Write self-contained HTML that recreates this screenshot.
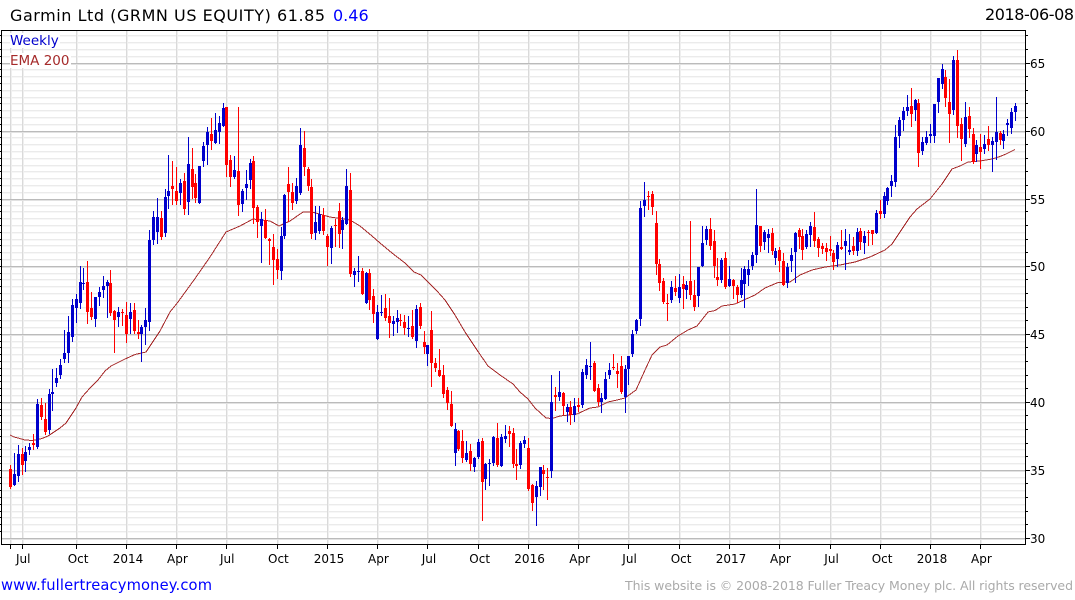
<!DOCTYPE html>
<html lang="en"><head><meta charset="utf-8"><title>Garmin Ltd (GRMN US EQUITY)</title>
<style>
html,body{margin:0;padding:0;background:#fff;width:1075px;height:600px;overflow:hidden}
svg{display:block}
text{font-family:"DejaVu Sans","Liberation Sans",sans-serif;white-space:pre}
</style></head><body>
<svg width="1075" height="600" viewBox="0 0 1075 600" xmlns="http://www.w3.org/2000/svg">
<rect width="1075" height="600" fill="#fff"/>
<g shape-rendering="crispEdges" fill="none">
<!-- minor horizontal grid -->
<path transform="translate(0,1)" stroke="#f7f7f7" d="M2 531.5H1025M2 524.5H1025M2 517.5H1025M2 511.5H1025M2 504.5H1025M2 497.5H1025M2 490.5H1025M2 483.5H1025M2 477.5H1025M2 463.5H1025M2 456.5H1025M2 449.5H1025M2 443.5H1025M2 436.5H1025M2 429.5H1025M2 422.5H1025M2 415.5H1025M2 409.5H1025M2 395.5H1025M2 388.5H1025M2 381.5H1025M2 375.5H1025M2 368.5H1025M2 361.5H1025M2 354.5H1025M2 347.5H1025M2 341.5H1025M2 327.5H1025M2 320.5H1025M2 313.5H1025M2 307.5H1025M2 300.5H1025M2 293.5H1025M2 286.5H1025M2 279.5H1025M2 273.5H1025M2 259.5H1025M2 252.5H1025M2 245.5H1025M2 239.5H1025M2 232.5H1025M2 225.5H1025M2 218.5H1025M2 211.5H1025M2 205.5H1025M2 192.5H1025M2 185.5H1025M2 178.5H1025M2 171.5H1025M2 165.5H1025M2 158.5H1025M2 151.5H1025M2 144.5H1025M2 137.5H1025M2 124.5H1025M2 117.5H1025M2 110.5H1025M2 103.5H1025M2 97.5H1025M2 90.5H1025M2 83.5H1025M2 76.5H1025M2 69.5H1025M2 56.5H1025M2 49.5H1025M2 42.5H1025M2 35.5H1025"/>
<path stroke="#ebebeb" d="M2 531.5H1025M2 524.5H1025M2 517.5H1025M2 511.5H1025M2 504.5H1025M2 497.5H1025M2 490.5H1025M2 483.5H1025M2 477.5H1025M2 463.5H1025M2 456.5H1025M2 449.5H1025M2 443.5H1025M2 436.5H1025M2 429.5H1025M2 422.5H1025M2 415.5H1025M2 409.5H1025M2 395.5H1025M2 388.5H1025M2 381.5H1025M2 375.5H1025M2 368.5H1025M2 361.5H1025M2 354.5H1025M2 347.5H1025M2 341.5H1025M2 327.5H1025M2 320.5H1025M2 313.5H1025M2 307.5H1025M2 300.5H1025M2 293.5H1025M2 286.5H1025M2 279.5H1025M2 273.5H1025M2 259.5H1025M2 252.5H1025M2 245.5H1025M2 239.5H1025M2 232.5H1025M2 225.5H1025M2 218.5H1025M2 211.5H1025M2 205.5H1025M2 192.5H1025M2 185.5H1025M2 178.5H1025M2 171.5H1025M2 165.5H1025M2 158.5H1025M2 151.5H1025M2 144.5H1025M2 137.5H1025M2 124.5H1025M2 117.5H1025M2 110.5H1025M2 103.5H1025M2 97.5H1025M2 90.5H1025M2 83.5H1025M2 76.5H1025M2 69.5H1025M2 56.5H1025M2 49.5H1025M2 42.5H1025M2 35.5H1025"/>
<!-- vertical grid -->
<path transform="translate(1,0)" stroke="#efefef" d="M10.5 31V544M22.5 31V544M76.5 31V544M126.5 31V544M176.5 31V544M226.5 31V544M277.5 31V544M327.5 31V544M377.5 31V544M427.5 31V544M478.5 31V544M528.5 31V544M578.5 31V544M628.5 31V544M679.5 31V544M729.5 31V544M779.5 31V544M830.5 31V544M880.5 31V544M930.5 31V544M980.5 31V544"/>
<path stroke="#dadada" d="M10.5 31V544M22.5 31V544M76.5 31V544M126.5 31V544M176.5 31V544M226.5 31V544M277.5 31V544M327.5 31V544M377.5 31V544M427.5 31V544M478.5 31V544M528.5 31V544M578.5 31V544M628.5 31V544M679.5 31V544M729.5 31V544M779.5 31V544M830.5 31V544M880.5 31V544M930.5 31V544M980.5 31V544"/>
<!-- major horizontal grid -->
<path transform="translate(0,1)" stroke="#e2e2e2" d="M2 538.5H1025M2 470.5H1025M2 402.5H1025M2 334.5H1025M2 266.5H1025M2 199.5H1025M2 131.5H1025M2 63.5H1025"/>
<path stroke="#bbbbbb" d="M2 538.5H1025M2 470.5H1025M2 402.5H1025M2 334.5H1025M2 266.5H1025M2 199.5H1025M2 131.5H1025M2 63.5H1025"/>
<rect x="10" y="33" width="50" height="15" fill="#fff"/>
<rect x="10" y="53" width="61" height="15" fill="#fff"/>
<!-- frame and ticks -->
<path stroke="#000" d="M1.5 30.5H1025.5V544.5H1.5Z"/>
<path stroke="#000" d="M0 531.5h1M0 524.5h1M0 517.5h1M0 511.5h1M0 504.5h1M0 497.5h1M0 490.5h1M0 483.5h1M0 477.5h1M0 470.5h1M0 463.5h1M0 456.5h1M0 449.5h1M0 443.5h1M0 436.5h1M0 429.5h1M0 422.5h1M0 415.5h1M0 409.5h1M0 402.5h1M0 395.5h1M0 388.5h1M0 381.5h1M0 375.5h1M0 368.5h1M0 361.5h1M0 354.5h1M0 347.5h1M0 341.5h1M0 334.5h1M0 327.5h1M0 320.5h1M0 313.5h1M0 307.5h1M0 300.5h1M0 293.5h1M0 286.5h1M0 279.5h1M0 273.5h1M0 266.5h1M0 259.5h1M0 252.5h1M0 245.5h1M0 239.5h1M0 232.5h1M0 225.5h1M0 218.5h1M0 211.5h1M0 205.5h1M0 199.5h1M0 192.5h1M0 185.5h1M0 178.5h1M0 171.5h1M0 165.5h1M0 158.5h1M0 151.5h1M0 144.5h1M0 137.5h1M0 131.5h1M0 124.5h1M0 117.5h1M0 110.5h1M0 103.5h1M0 97.5h1M0 90.5h1M0 83.5h1M0 76.5h1M0 69.5h1M0 63.5h1M0 56.5h1M0 49.5h1M0 42.5h1M0 35.5h1"/>
<path stroke="#000" d="M1026 524.5h2M1026 511.5h2M1026 497.5h2M1026 483.5h2M1026 456.5h2M1026 443.5h2M1026 429.5h2M1026 415.5h2M1026 388.5h2M1026 375.5h2M1026 361.5h2M1026 347.5h2M1026 320.5h2M1026 307.5h2M1026 293.5h2M1026 279.5h2M1026 252.5h2M1026 239.5h2M1026 225.5h2M1026 211.5h2M1026 185.5h2M1026 171.5h2M1026 158.5h2M1026 144.5h2M1026 117.5h2M1026 103.5h2M1026 90.5h2M1026 76.5h2M1026 49.5h2M1026 35.5h2M1026 538.5h4M1026 470.5h4M1026 402.5h4M1026 334.5h4M1026 266.5h4M1026 199.5h4M1026 131.5h4M1026 63.5h4"/>
<path stroke="#000" d="M10.5 545v4M22.5 545v4M76.5 545v4M126.5 545v4M176.5 545v4M226.5 545v4M277.5 545v4M327.5 545v4M377.5 545v4M427.5 545v4M478.5 545v4M528.5 545v4M578.5 545v4M628.5 545v4M679.5 545v4M729.5 545v4M779.5 545v4M830.5 545v4M880.5 545v4M930.5 545v4M980.5 545v4"/>
<!-- EMA -->
<polyline stroke="#a52a2a" points="10,435 14,437 18,438 25,440 33,440.5 42,438.5 48,436 60,428 66,423 76,408 82,397 90,388 98,380 105,371 111,366 125,359 135,354.5 146,352 160,331 170,312 178,302 194,280 210,257 226,232 240,226 253,219 270,221 279,226 290,221 303,212 312,212 330,217 350,220 360,226 372,236 380,243 392,253 405,263 414,272 421,275 437,291 445,300 455,315 465,332 477,350 488,366 500,375 513,384 520,392 528,399 535,408 546,418 552,418.5 560,416 577,414 590,408 598,407 608,402 617,400 625,398 636,390 645,370 652,355 660,347 667,345 678,336 688,330 697,326 708,312 715,310.5 722,306 735,304 755,295 765,288 778,282.5 790,282 800,275 812,270 825,267 840,265 855,262 870,257 885,250 892,244 900,232 910,217 917,209 930,199 942,184 952,169 960,166 968,162 980,161 992,159 1000,156.5 1006,154 1015,149.5"/>
<!-- blue wicks -->
<path stroke="#0000cc" d="M14.5 453V486M18.5 445V482M25.5 446V472M29.5 443V455M37.5 399V449M49.5 389V434M52.5 369V411M56.5 368V387M60.5 359V379M64.5 330V363M68.5 316V363M72.5 299V342M76.5 294V323M80.5 266V309M83.5 268V290M95.5 297V327M99.5 287V306M103.5 276V298M107.5 280V318M118.5 307V327M130.5 303V334M141.5 325V362M145.5 308V345M149.5 230V331M153.5 211V245M157.5 198V244M165.5 189V237M168.5 155V209M180.5 179V205M188.5 137V215M199.5 166V204M203.5 142V167M207.5 127V165M215.5 113V144M219.5 116V144M223.5 103V127M234.5 156V179M242.5 189V212M246.5 170V200M250.5 159V189M261.5 212V263M281.5 227V280M284.5 194V239M296.5 178V204M300.5 128V195M315.5 206V240M319.5 206V234M331.5 226V264M342.5 217V249M346.5 169V225M354.5 268V287M358.5 256V282M366.5 272V304M377.5 305V340M381.5 295V316M393.5 316V336M397.5 310V333M408.5 316V337M416.5 305V348M427.5 345V366M455.5 423V466M466.5 441V462M474.5 457V472M478.5 439V459M485.5 463V490M489.5 459V486M493.5 436V466M501.5 434V467M505.5 425V443M520.5 441V469M524.5 436V448M536.5 481V526M540.5 467V496M551.5 375V478M559.5 371V401M567.5 404V422M574.5 398V422M582.5 369V408M586.5 359V379M590.5 342V380M601.5 393V413M605.5 372V400M609.5 363V379M625.5 365V413M628.5 356V385M632.5 330V357M636.5 319V334M640.5 201V326M644.5 182V217M671.5 281V303M679.5 274V303M686.5 281V299M698.5 267V307M702.5 226V267M706.5 226V245M721.5 258V283M729.5 266V287M741.5 268V298M744.5 266V308M748.5 260V286M752.5 252V270M756.5 189V263M764.5 230V250M768.5 229V253M775.5 248V265M787.5 263V288M791.5 248V272M795.5 232V283M806.5 230V249M810.5 222V247M837.5 242V267M845.5 229V270M849.5 234V255M857.5 228V256M864.5 231V254M876.5 210V234M884.5 192V218M887.5 187V205M891.5 175V197M895.5 125V187M899.5 117V148M903.5 107V131M907.5 95V116M915.5 99V121M922.5 137V155M926.5 131V145M930.5 124V143M934.5 104V143M938.5 78V113M942.5 64V89M953.5 56V115M965.5 102V147M976.5 140V162M984.5 135V154M992.5 137V172M996.5 97V160M1003.5 130V149M1007.5 119V136M1011.5 108V134M1015.5 103V121"/>
<!-- blue bodies -->
<path stroke="#0000cc" stroke-width="3" d="M14.5 474V485M18.5 454V476M25.5 452V461M29.5 447V450M37.5 404V447M49.5 394V430M52.5 392V394M56.5 378V383M60.5 365V375M64.5 353V359M68.5 332V353M72.5 305V337M76.5 299V308M80.5 282V303M83.5 283V284M95.5 297V319M99.5 292V297M103.5 286V290M107.5 282V286M118.5 312V317M130.5 312V319M141.5 327V334M145.5 320V327M149.5 240V322M153.5 217V240M157.5 217V232M165.5 197V233M168.5 191V196M180.5 183V193M188.5 164V202M199.5 166V203M203.5 146V161M207.5 132V145M215.5 130V143M219.5 123V132M223.5 108V126M234.5 170V177M242.5 191V204M246.5 184V188M250.5 163V180M261.5 219V226M281.5 236V271M284.5 195V236M296.5 186V201M300.5 145V193M315.5 222V233M319.5 214V231M331.5 228V248M342.5 220V230M346.5 186V224M354.5 271V275M358.5 271V272M366.5 273V303M377.5 312V339M381.5 312V313M393.5 321V324M397.5 318V322M408.5 328V329M416.5 309V341M427.5 345V354M455.5 429V453M466.5 453V460M474.5 458V467M478.5 442V457M485.5 464V479M489.5 463V464M493.5 437V463M501.5 437V466M505.5 436V439M520.5 443V465M524.5 440V444M536.5 486V497M540.5 467V487M551.5 402V471M559.5 392V397M567.5 407V412M574.5 406V415M582.5 372V405M586.5 365V375M590.5 366V367M601.5 398V402M605.5 379V399M609.5 370V375M625.5 369V397M628.5 356V369M632.5 334V354M636.5 320V331M640.5 208V319M644.5 200V206M671.5 287V300M679.5 287V298M686.5 285V290M698.5 267V296M702.5 243V266M706.5 229V240M721.5 260V280M729.5 279V286M741.5 280V295M744.5 269V284M748.5 269V275M752.5 255V266M756.5 225V255M764.5 232V242M768.5 234V238M775.5 251V258M787.5 267V283M791.5 255V261M795.5 233V252M806.5 234V247M810.5 226V235M837.5 245V259M845.5 241V246M849.5 250V252M857.5 232V251M864.5 236V243M876.5 213V233M884.5 196V214M887.5 188V201M891.5 181V186M895.5 137V182M899.5 120V136M903.5 111V120M907.5 107V111M915.5 100V110M922.5 142V151M926.5 137V143M930.5 134V136M934.5 104V136M938.5 78V102M942.5 69V84M953.5 60V110M965.5 117V144M976.5 145V154M984.5 144V149M992.5 141V145M996.5 132V142M1003.5 134V141M1007.5 123V125M1011.5 112V128M1015.5 106V112"/>
<!-- red wicks -->
<path stroke="#ff0000" d="M10.5 465V489M22.5 448V475M33.5 434V450M41.5 398V420M45.5 403V435M87.5 261V324M91.5 292V320M110.5 270V316M114.5 310V353M122.5 309V326M126.5 302V343M134.5 303V334M138.5 320V339M161.5 211V240M172.5 161V205M176.5 167V205M184.5 173V215M192.5 148V199M195.5 174V203M211.5 118V150M226.5 107V177M230.5 155V187M238.5 107V216M253.5 156V224M257.5 205V238M265.5 209V239M269.5 238V265M273.5 234V285M277.5 249V279M288.5 167V222M292.5 183V210M304.5 131V176M308.5 167V191M311.5 179V239M323.5 208V235M327.5 234V266M335.5 219V247M339.5 203V248M350.5 173V277M362.5 268V295M369.5 269V310M373.5 289V323M385.5 294V321M389.5 298V338M400.5 314V326M404.5 315V335M412.5 310V339M420.5 303V329M424.5 331V354M431.5 311V387M435.5 358V372M439.5 349V377M443.5 365V398M447.5 387V410M451.5 391V427M458.5 430V451M462.5 430V463M470.5 444V471M482.5 438V521M497.5 423V467M509.5 426V447M513.5 428V468M516.5 449V480M528.5 438V491M532.5 484V511M543.5 465V490M547.5 468V500M555.5 387V411M563.5 392V415M570.5 401V425M578.5 398V412M594.5 361V392M598.5 384V406M613.5 354V370M617.5 363V388M621.5 356V394M648.5 191V210M652.5 191V215M656.5 211V275M659.5 259V291M663.5 278V304M667.5 294V321M675.5 276V296M683.5 276V309M690.5 221V300M694.5 280V311M710.5 218V250M714.5 230V278M717.5 258V286M725.5 252V289M733.5 279V299M737.5 285V303M760.5 226V252M772.5 228V255M779.5 247V272M783.5 253V286M799.5 228V249M802.5 229V260M814.5 212V247M818.5 237V257M822.5 243V254M826.5 243V261M830.5 236V256M833.5 250V270M841.5 230V250M853.5 237V255M860.5 228V250M868.5 230V246M872.5 230V245M880.5 200V219M911.5 88V127M918.5 99V167M945.5 70V107M949.5 79V143M957.5 50V138M961.5 118V161M969.5 107V138M973.5 128V164M980.5 134V169M988.5 126V151M1000.5 131V145"/>
<!-- red bodies -->
<path stroke="#ff0000" stroke-width="3" d="M10.5 469V487M22.5 454V465M33.5 443V445M41.5 405V417M45.5 419V432M87.5 282V312M91.5 308V317M110.5 283V313M114.5 311V320M122.5 312V313M126.5 315V334M134.5 310V331M138.5 332V334M161.5 218V237M172.5 186V189M176.5 191V201M184.5 181V209M192.5 169V187M195.5 183V198M211.5 134V141M226.5 107V165M230.5 160V177M238.5 171V205M253.5 161V208M257.5 207V222M265.5 220V238M269.5 239V241M273.5 247V260M277.5 259V270M288.5 184V192M292.5 192V203M304.5 148V167M308.5 169V186M311.5 187V234M323.5 215V231M327.5 236V247M335.5 225V226M339.5 211V234M350.5 190V274M362.5 271V294M369.5 273V300M373.5 296V314M385.5 308V318M389.5 316V323M400.5 320V321M404.5 322V328M412.5 326V337M420.5 307V326M424.5 342V347M431.5 330V363M435.5 363V368M439.5 370V376M443.5 375V394M447.5 390V403M451.5 404V426M458.5 431V449M462.5 441V458M470.5 451V464M482.5 441V482M497.5 438V465M509.5 431V434M513.5 433V464M516.5 464V466M528.5 448V489M532.5 485V503M543.5 470V474M547.5 477V478M555.5 395V397M563.5 393V406M570.5 407V415M578.5 405V407M594.5 363V391M598.5 388V402M613.5 367V368M617.5 371V374M621.5 366V392M648.5 196V197M652.5 194V207M656.5 223V264M659.5 264V283M663.5 281V302M667.5 303V304M675.5 288V292M683.5 284V289M690.5 281V295M694.5 295V307M710.5 229V246M714.5 241V266M717.5 277V280M725.5 258V287M733.5 280V286M737.5 287V295M760.5 226V246M772.5 233V251M779.5 250V261M783.5 261V285M799.5 230V237M802.5 236V250M814.5 227V241M818.5 239V248M822.5 246V249M826.5 248V252M830.5 249V251M833.5 253V262M841.5 247V249M853.5 246V251M860.5 231V242M868.5 232V233M872.5 230V234M880.5 211V214M911.5 106V114M918.5 103V153M945.5 77V98M949.5 102V114M957.5 60V126M961.5 124V139M969.5 116V129M973.5 134V162M980.5 147V152M988.5 139V145M1000.5 133V140"/>
</g>
<!-- header -->
<text x="10" y="21" font-size="16" fill="#000" textLength="315">Garmin Ltd (GRMN US EQUITY) 61.85</text>
<text x="333" y="21" font-size="16" fill="#0000ff">0.46</text>
<text x="985" y="20" font-size="16" fill="#000" textLength="89">2018-06-08</text>
<text x="10" y="45" font-size="13.5" fill="#0000cc">Weekly</text>
<text x="10" y="65" font-size="13.5" fill="#a52a2a">EMA 200</text>
<!-- price axis -->
<g font-size="12" fill="#000">
<text x="1030" y="68">65</text><text x="1030" y="136">60</text><text x="1030" y="204">55</text><text x="1030" y="271">50</text><text x="1030" y="339">45</text><text x="1030" y="407">40</text><text x="1030" y="475">35</text><text x="1030" y="543">30</text>
<!-- date axis -->
<text x="16" y="563">Jul</text><text x="67.7" y="563">Oct</text><text x="112.7" y="563">2014</text><text x="167" y="563">Apr</text><text x="220" y="563">Jul</text><text x="268" y="563">Oct</text><text x="313.7" y="563">2015</text><text x="368" y="563">Apr</text><text x="421.7" y="563">Jul</text><text x="469.3" y="563">Oct</text><text x="514.3" y="563">2016</text><text x="569.3" y="563">Apr</text><text x="622.3" y="563">Jul</text><text x="670.7" y="563">Oct</text><text x="715.7" y="563">2017</text><text x="770" y="563">Apr</text><text x="824.3" y="563">Jul</text><text x="871.7" y="563">Oct</text><text x="916.7" y="563">2018</text><text x="971" y="563">Apr</text>
</g>
<!-- footer -->
<text x="1" y="590" font-size="14.7" fill="#0000ff" textLength="211">www.fullertreacymoney.com</text>
<text x="625" y="590" font-size="12.5" fill="#aaaaaa" textLength="448">This website is © 2008-2018 Fuller Treacy Money plc. All rights reserved</text>
</svg>
</body></html>
